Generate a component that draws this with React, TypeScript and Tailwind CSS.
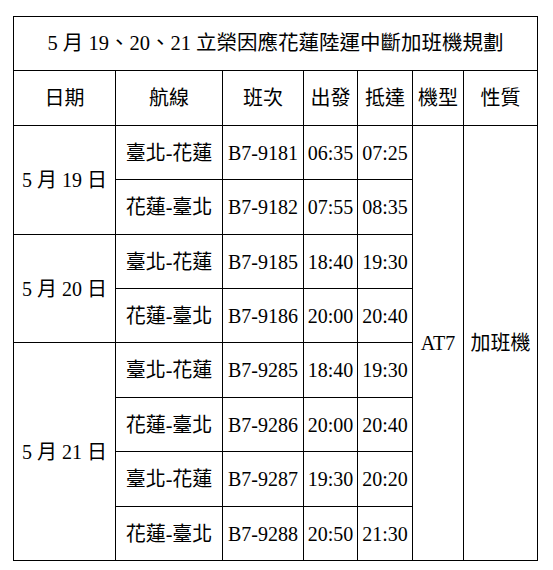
import React from "react";

const rows = [
  { route: "臺北-花蓮", flight: "B7-9181", dep: "06:35", arr: "07:25" },
  { route: "花蓮-臺北", flight: "B7-9182", dep: "07:55", arr: "08:35" },
  { route: "臺北-花蓮", flight: "B7-9185", dep: "18:40", arr: "19:30" },
  { route: "花蓮-臺北", flight: "B7-9186", dep: "20:00", arr: "20:40" },
  { route: "臺北-花蓮", flight: "B7-9285", dep: "18:40", arr: "19:30" },
  { route: "花蓮-臺北", flight: "B7-9286", dep: "20:00", arr: "20:40" },
  { route: "臺北-花蓮", flight: "B7-9287", dep: "19:30", arr: "20:20" },
  { route: "花蓮-臺北", flight: "B7-9288", dep: "20:50", arr: "21:30" },
];

const heights = ["h-[54px]", "h-[55px]", "h-[54px]", "h-[54px]", "h-[55px]", "h-[54px]", "h-[55px]", "h-[54px]"];

const dates: Record<number, { label: string; span: number }> = {
  0: { label: "5 月 19 日", span: 2 },
  2: { label: "5 月 20 日", span: 2 },
  4: { label: "5 月 21 日", span: 4 },
};

const cell = "border border-black text-center align-middle p-0";

export default function App() {
  return (
    <div
      className="bg-white w-[553px] h-[570px] pt-[16px] pl-[13px] text-black text-[20px] leading-none"
      style={{ fontFamily: '"Liberation Serif", "Noto Sans CJK TC", serif' }}
    >
      <table className="border-collapse table-fixed w-[524px]">
        <colgroup>
          <col className="w-[102px]" />
          <col className="w-[107px]" />
          <col className="w-[81px]" />
          <col className="w-[54px]" />
          <col className="w-[55px]" />
          <col className="w-[51px]" />
          <col className="w-[74px]" />
        </colgroup>
        <tbody>
          <tr>
            <td colSpan={7} className={`${cell} h-[54px] text-[20.5px]`}>
              5 月 19、20、21 立榮因應花蓮陸運中斷加班機規劃
            </td>
          </tr>
          <tr>
            <td className={`${cell} h-[55px]`}>日期</td>
            <td className={cell}>航線</td>
            <td className={cell}>班次</td>
            <td className={cell}>出發</td>
            <td className={cell}>抵達</td>
            <td className={cell}>機型</td>
            <td className={cell}>性質</td>
          </tr>
          {rows.map((r, i) => (
            <tr key={i}>
              {dates[i] && (
                <td rowSpan={dates[i].span} className={cell}>
                  {dates[i].label}
                </td>
              )}
              <td className={`${cell} ${heights[i]}`}>{r.route}</td>
              <td className={cell}>{r.flight}</td>
              <td className={cell}>{r.dep}</td>
              <td className={cell}>{r.arr}</td>
              {i === 0 && (
                <>
                  <td rowSpan={8} className={cell}>
                    AT7
                  </td>
                  <td rowSpan={8} className={cell}>
                    加班機
                  </td>
                </>
              )}
            </tr>
          ))}
        </tbody>
      </table>
    </div>
  );
}
